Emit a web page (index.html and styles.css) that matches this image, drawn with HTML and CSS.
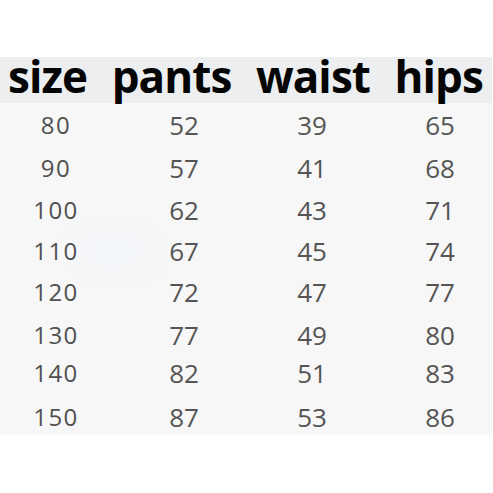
FILE: index.html
```html
<!DOCTYPE html>
<html>
<head>
<meta charset="utf-8">
<link rel="stylesheet" href="styles.css">
</head>
<body>
<div class="chart">
  <div class="head">
    <span>size</span><span>pants</span><span>waist</span><span>hips</span>
  </div>
  <div class="rows">
    <span class="c1">80</span><span>52</span><span>39</span><span>65</span>
    <span class="c1">90</span><span>57</span><span>41</span><span>68</span>
    <span class="c1">100</span><span>62</span><span>43</span><span>71</span>
    <span class="c1">110</span><span>67</span><span>45</span><span>74</span>
    <span class="c1">120</span><span>72</span><span>47</span><span>77</span>
    <span class="c1">130</span><span>77</span><span>49</span><span>80</span>
    <span class="c1">140</span><span>82</span><span>51</span><span>83</span>
    <span class="c1">150</span><span>87</span><span>53</span><span>86</span>
  </div>
</div>
</body>
</html>
```

FILE: styles.css
```css
html, body {
  margin: 0;
  padding: 0;
  background: #ffffff;
}
body {
  width: 493px;
  height: 493px;
  overflow: hidden;
}
.chart {
  padding-top: 57px;
  width: 492px;
  font-family: "Open Sans", "DejaVu Sans", sans-serif;
}
.head {
  height: 46px;
  background: #eceef0;
  display: flex;
  justify-content: space-between;
  align-items: flex-end;
  padding: 0 9px 0 8px;
  font-weight: 700;
  font-size: 44px;
  letter-spacing: -0.9px;
  line-height: 46px;
  color: #050505;
  box-sizing: border-box;
}
.head span {
  position: relative;
  top: -4px;
}
.rows {
  height: 332px;
  box-sizing: border-box;
  padding: 9px 0 0 6px;
  background:
    radial-gradient(ellipse 60px 38px at 113px 147px, rgba(243, 246, 250, 1), rgba(247, 247, 247, 0)),
    #f7f7f7;
  display: grid;
  grid-template-columns: repeat(4, 100px);
  column-gap: 28px;
  grid-template-rows: 43px 42px 41px 41px 43px 38px 44px 1fr;
  align-items: start;
  font-size: 26px;
  line-height: 26px;
  color: #555555;
  text-align: center;
}
.rows .c1 {
  font-size: 24px;
  letter-spacing: 1.5px;
  color: #505050;
}
```
